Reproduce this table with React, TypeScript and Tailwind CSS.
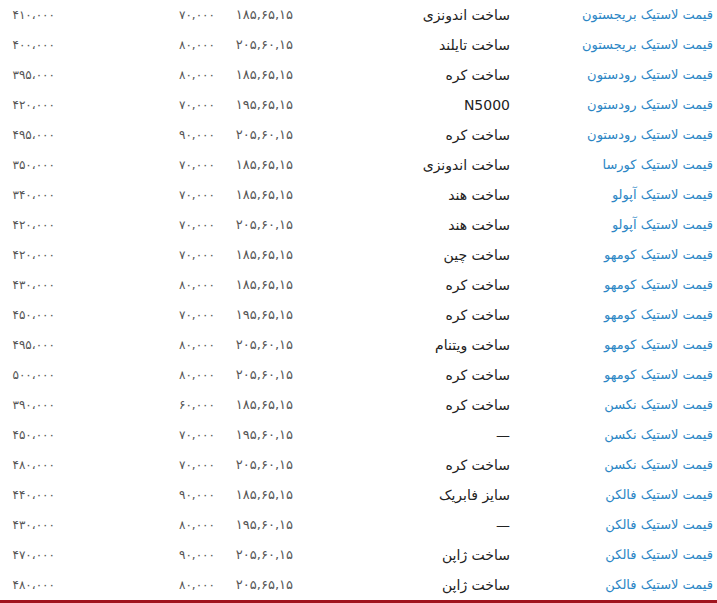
const rows: [string, string, string, string, string][] = [
  ['قیمت لاستیک بریجستون', 'ساخت اندونزی', '۱۸۵,۶۵,۱۵', '۷۰,۰۰۰', '۴۱۰،۰۰۰'],
  ['قیمت لاستیک بریجستون', 'ساخت تایلند', '۲۰۵,۶۰,۱۵', '۸۰,۰۰۰', '۴۰۰،۰۰۰'],
  ['قیمت لاستیک رودستون', 'ساخت کره', '۱۸۵,۶۵,۱۵', '۸۰,۰۰۰', '۳۹۵،۰۰۰'],
  ['قیمت لاستیک رودستون', 'N5000', '۱۹۵,۶۵,۱۵', '۷۰,۰۰۰', '۴۲۰،۰۰۰'],
  ['قیمت لاستیک رودستون', 'ساخت کره', '۲۰۵,۶۰,۱۵', '۹۰,۰۰۰', '۴۹۵،۰۰۰'],
  ['قیمت لاستیک کورسا', 'ساخت اندونزی', '۱۸۵,۶۵,۱۵', '۷۰,۰۰۰', '۳۵۰،۰۰۰'],
  ['قیمت لاستیک آپولو', 'ساخت هند', '۱۸۵,۶۵,۱۵', '۷۰,۰۰۰', '۳۴۰،۰۰۰'],
  ['قیمت لاستیک آپولو', 'ساخت هند', '۲۰۵,۶۰,۱۵', '۷۰,۰۰۰', '۴۲۰،۰۰۰'],
  ['قیمت لاستیک کومهو', 'ساخت چین', '۱۸۵,۶۵,۱۵', '۷۰,۰۰۰', '۴۲۰،۰۰۰'],
  ['قیمت لاستیک کومهو', 'ساخت کره', '۱۸۵,۶۵,۱۵', '۸۰,۰۰۰', '۴۳۰،۰۰۰'],
  ['قیمت لاستیک کومهو', 'ساخت کره', '۱۹۵,۶۵,۱۵', '۷۰,۰۰۰', '۴۵۰،۰۰۰'],
  ['قیمت لاستیک کومهو', 'ساخت ویتنام', '۲۰۵,۶۰,۱۵', '۸۰,۰۰۰', '۴۹۵،۰۰۰'],
  ['قیمت لاستیک کومهو', 'ساخت کره', '۲۰۵,۶۰,۱۵', '۸۰,۰۰۰', '۵۰۰،۰۰۰'],
  ['قیمت لاستیک نکسن', 'ساخت کره', '۱۸۵,۶۵,۱۵', '۶۰,۰۰۰', '۳۹۰،۰۰۰'],
  ['قیمت لاستیک نکسن', '—', '۱۹۵,۶۰,۱۵', '۷۰,۰۰۰', '۴۵۰،۰۰۰'],
  ['قیمت لاستیک نکسن', 'ساخت کره', '۲۰۵,۶۰,۱۵', '۷۰,۰۰۰', '۴۸۰،۰۰۰'],
  ['قیمت لاستیک فالکن', 'سایز فابریک', '۱۸۵,۶۵,۱۵', '۹۰,۰۰۰', '۴۴۰،۰۰۰'],
  ['قیمت لاستیک فالکن', '—', '۱۹۵,۶۰,۱۵', '۸۰,۰۰۰', '۴۳۰،۰۰۰'],
  ['قیمت لاستیک فالکن', 'ساخت ژاپن', '۲۰۵,۶۰,۱۵', '۹۰,۰۰۰', '۴۷۰،۰۰۰'],
  ['قیمت لاستیک فالکن', 'ساخت ژاپن', '۲۰۵,۶۵,۱۵', '۸۰,۰۰۰', '۴۸۰،۰۰۰'],
];

export default function App() {
  return (
    <div className="w-[717px] h-[603px] overflow-hidden bg-white" dir="rtl" style={{ fontFamily: '"DejaVu Sans", sans-serif' }}>
      <div className="border-b-[3px] border-[#a0141e]">
        {rows.map((r, i) => (
          <div key={i} className="grid grid-cols-[205px_219px_78px_158px_57px] h-[30px] items-center">
            <a href="#" className="pr-[4px] text-[13px] text-[#2b86c5] whitespace-nowrap">{r[0]}</a>
            <div className="pr-[2px] text-[14px] text-[#222] whitespace-nowrap">{r[1]}</div>
            <div className="text-[13px] tracking-[0.3px] text-[#555] whitespace-nowrap">{r[2]}</div>
            <div className="text-[12px] text-[#555] whitespace-nowrap">{r[3]}</div>
            <div className="pr-[2px] text-[12px] tracking-[-1.3px] text-[#555] whitespace-nowrap">{r[4]}</div>
          </div>
        ))}
      </div>
    </div>
  );
}
